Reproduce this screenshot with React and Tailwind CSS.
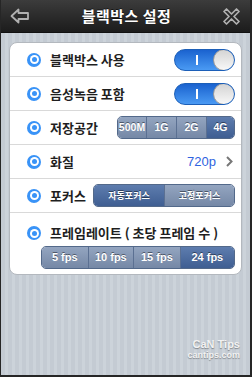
import React from 'react';

const font = { fontFamily: '"Noto Sans CJK KR", "Noto Sans", sans-serif' };
const latin = { fontFamily: '"Liberation Sans", "Noto Sans CJK KR", sans-serif' };

function Radio() {
    return (
        <span className="w-[14px] h-[14px] rounded-full bg-[#3993f7] flex items-center justify-center shrink-0">
            <span className="w-[9px] h-[9px] rounded-full bg-white flex items-center justify-center">
                <span className="w-[5px] h-[5px] rounded-full bg-[#3993f7]" />
            </span>
        </span>
    );
}

function Toggle() {
    return (
        <div className="relative w-[61px] h-[22px] rounded-full border border-[#1c5fb8] bg-linear-to-b from-[#1a62cf] to-[#4a9af3] overflow-hidden">
            <span className="absolute left-[21px] top-[5px] w-[2px] h-[10px] bg-white" />
            <span className="absolute right-[-1px] top-[-1px] w-[22px] h-[22px] rounded-full border border-[#9a9a9a] bg-linear-to-b from-[#d4d4d4] to-[#f8f8f8]" />
        </div>
    );
}

function Segmented({ items, active, widths, textClass = 'text-[10px]', style }) {
    return (
        <div style={style} className="flex h-[23px] rounded-[5px] border border-[#53698a] overflow-hidden">
            {items.map((it, i) => (
                <div
                    key={it}
                    style={{ width: widths[i] }}
                    className={`flex items-center justify-center font-bold text-white ${textClass} [text-shadow:0_-1px_0_rgba(0,0,0,0.45)] ${i > 0 ? 'border-l border-[#5b7092]' : ''} ${i === active ? 'bg-linear-to-b from-[#5e7dae] to-[#3f5e92]' : 'bg-linear-to-b from-[#94a5c0] to-[#7588a6]'}`}
                >
                    {it}
                </div>
            ))}
        </div>
    );
}

function Row({ label, children }) {
    return (
        <div className="flex items-center h-[34px] pl-[17px] pr-[6px] border-b border-[#d9d9d9]">
            <Radio />
            <span className="ml-[9px] text-[13px] font-semibold text-[#1f1f1f] flex-1 whitespace-nowrap">{label}</span>
            {children}
        </div>
    );
}

export default function App() {
    return (
        <div style={font} className="w-[252px] h-[377px] overflow-hidden flex flex-col border-l border-r-2 border-b-2 border-[#262626] bg-[repeating-linear-gradient(90deg,#c4cbd3_0px,#c4cbd3_4px,#ccd3da_4px,#ccd3da_7px)]">
            {/* Header */}
            <div className="h-[33px] shrink-0 flex items-center justify-between pl-[9px] pr-[10px] bg-linear-to-b from-[#3c3c3c] to-[#1c1c1c] border-b border-[#111]">
                <svg width="20" height="16" viewBox="0 0 20 16" fill="none" stroke="#b0b0b0" strokeWidth="1.8" strokeLinejoin="round">
                    <path d="M1.5 8 L8.5 1.5 L8.5 5 L18 5 L18 11 L8.5 11 L8.5 14.5 Z" />
                </svg>
                <span className="text-[15px] font-bold text-white tracking-[0.5px] [text-shadow:0_-1px_0_rgba(0,0,0,0.6)]">블랙박스 설정</span>
                <svg width="17" height="17" viewBox="0 0 17 17" fill="none" stroke="#b0b0b0" strokeWidth="1.7" strokeLinejoin="round">
                    <path d="M3.5 1 L8.5 6 L13.5 1 L16 3.5 L11 8.5 L16 13.5 L13.5 16 L8.5 11 L3.5 16 L1 13.5 L6 8.5 L1 3.5 Z" />
                </svg>
            </div>

            {/* Card */}
            <div className="mt-[9px] mx-[8px] bg-white rounded-[8px] border border-[#b3b8be] flex flex-col">
                <Row label="블랙박스 사용"><Toggle /></Row>
                <Row label="음성녹음 포함"><Toggle /></Row>
                <Row label="저장공간">
                    <Segmented items={['500M', '1G', '2G', '4G']} active={3} widths={[28, 30, 30, 28]} textClass="text-[10.5px]" style={latin} />
                </Row>
                <Row label="화질">
                    <span className="text-[13px] text-[#2f63e0] mr-[10px]" style={latin}>720p</span>
                    <svg width="7" height="11" viewBox="0 0 7 11" fill="none" stroke="#777" strokeWidth="2">
                        <path d="M1 1 L5.5 5.5 L1 10" />
                    </svg>
                    <span className="w-[2px]" />
                </Row>
                <Row label="포커스">
                    <Segmented items={['자동포커스', '고정포커스']} active={0} widths={[70, 70]} textClass="text-[9px]" />
                </Row>
                <div className="flex flex-col pl-[17px] pr-[6px] pt-[12px] pb-[5px]">
                    <div className="flex items-center h-[16px]">
                        <Radio />
                        <span className="ml-[9px] text-[13px] font-semibold leading-[16px] text-[#1f1f1f] whitespace-nowrap">프레임레이트 ( 초당 프레임 수 )</span>
                    </div>
                    <div className="mt-[5px] ml-[14px]">
                        <Segmented items={['5 fps', '10 fps', '15 fps', '24 fps']} active={3} widths={[47, 47, 48, 56]} textClass="text-[11px]" style={latin} />
                    </div>
                </div>
            </div>

            {/* Watermark */}
            <div className="flex-1 flex flex-col items-end justify-end pr-[10px] pb-[14px]" style={latin}>
                <span className="text-[11px] font-bold leading-[12px] text-[#f2f2f2] [text-shadow:0_1px_1px_rgba(0,0,0,0.35)]">CaN Tips</span>
                <span className="text-[9px] font-bold leading-[11px] text-[#f2f2f2] [text-shadow:0_1px_1px_rgba(0,0,0,0.35)]">cantips.com</span>
            </div>
        </div>
    );
}
